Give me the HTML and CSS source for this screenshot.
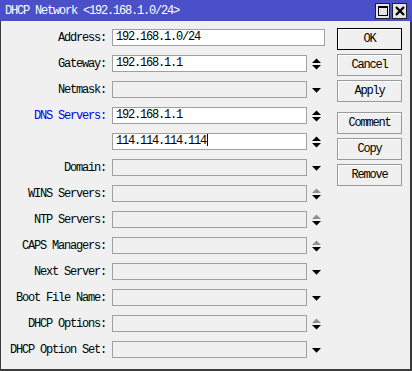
FILE: index.html
```html
<!DOCTYPE html>
<html lang="en">
<head>
  <meta charset="UTF-8">
  <title>DHCP Network</title>
  <link rel="stylesheet" href="styles.css">
</head>
<body>
  <div class="window">
    <div class="titlebar">
      <span class="title">DHCP Network &lt;192.168.1.0/24&gt;</span>
      <div class="tbtns">
        <span class="tbtn"><svg width="10" height="10" viewBox="0 0 10 10"><rect x="0.5" y="0.5" width="9" height="9" fill="none" stroke="#000"/><rect x="0" y="0" width="10" height="2" fill="#000"/></svg></span>
        <span class="tbtn"><svg width="10" height="10" viewBox="0 0 10 10"><path d="M1 1 L9 9 M9 1 L1 9" stroke="#000" stroke-width="2.2"/></svg></span>
      </div>
    </div>

    <div class="content">
      <div class="form">
        <div class="row"><label>Address:</label><div class="field filled wide">192.168.1.0/24</div></div>
        <div class="row"><label>Gateway:</label><div class="field filled">192.168.1.1</div><span class="arrow spin"></span></div>
        <div class="row"><label>Netmask:</label><div class="field"></div><span class="arrow drop"></span></div>
        <div class="row"><label class="blue">DNS Servers:</label><div class="field filled">192.168.1.1</div><span class="arrow spin"></span></div>
        <div class="row"><label></label><div class="field filled">114.114.114.114<i class="caret"></i></div><span class="arrow spin"></span></div>
        <div class="row"><label>Domain:</label><div class="field"></div><span class="arrow drop"></span></div>
        <div class="row"><label>WINS Servers:</label><div class="field"></div><span class="arrow spin off"></span></div>
        <div class="row"><label>NTP Servers:</label><div class="field"></div><span class="arrow spin off"></span></div>
        <div class="row"><label>CAPS Managers:</label><div class="field"></div><span class="arrow spin off"></span></div>
        <div class="row"><label>Next Server:</label><div class="field"></div><span class="arrow drop"></span></div>
        <div class="row"><label>Boot File Name:</label><div class="field"></div><span class="arrow drop"></span></div>
        <div class="row"><label>DHCP Options:</label><div class="field"></div><span class="arrow spin off"></span></div>
        <div class="row"><label>DHCP Option Set:</label><div class="field"></div><span class="arrow drop"></span></div>
      </div>

      <div class="buttons">
        <button class="default">OK</button>
        <button>Cancel</button>
        <button>Apply</button>
        <button class="sep">Comment</button>
        <button>Copy</button>
        <button>Remove</button>
      </div>
    </div>
  </div>

  <script>
    // arrows are the same svg everywhere, fill them in here
    const spin = '<svg width="9" height="12" viewBox="0 0 9 12"><polygon class="up" points="0,5 4.5,0.5 9,5"/><polygon points="0,7 9,7 4.5,11.5"/></svg>';
    const drop = '<svg width="9" height="5" viewBox="0 0 9 5"><polygon points="0,0 9,0 4.5,4.8"/></svg>';
    document.querySelectorAll('.arrow.spin').forEach(el => el.innerHTML = spin);
    document.querySelectorAll('.arrow.drop').forEach(el => el.innerHTML = drop);
  </script>
</body>
</html>
```

FILE: styles.css
```css
body { margin: 0; font-family: 'Liberation Mono', 'DejaVu Sans Mono', monospace; font-size: 12px; letter-spacing: -1.2px; color: #000; }
.window { width: 412px; height: 371px; box-sizing: border-box; background: #f0f0f0; border-left: 1px solid #3a3a3a; border-right: 2px solid #3a3a3a; border-bottom: 2px solid #3a3a3a; }
.titlebar { height: 21px; background: #4b50c8; display: flex; align-items: center; justify-content: space-between; padding: 0 5px 0 5px; margin-left: -1px; margin-right: -2px; }
.title { color: #fff; }
.tbtns { display: flex; gap: 2px; margin-top: 1px; }
.tbtn { width: 13px; height: 14px; border: 1px solid #202020; background: #e4e4e4; display: flex; align-items: center; justify-content: center; }

.content { display: flex; padding-top: 7px; }
.form { display: flex; flex-direction: column; gap: 9px; padding-top: 1px; }
.row { display: flex; align-items: center; height: 17px; }
.row label { width: 105px; margin-right: 6px; text-align: right; white-space: nowrap; }
.row label.blue { color: #0000e6; }
.field { width: 195px; height: 17px; box-sizing: border-box; border: 1px solid #a0a0a0; background: #f0f0f0; padding: 0 3px; line-height: 15px; white-space: nowrap; }
.field.filled { background: #fff; }
.field.wide { width: 213px; }
.caret { display: inline-block; width: 1px; height: 12px; background: #000; vertical-align: -2px; margin-left: 1px; }
.arrow { width: 18px; display: flex; justify-content: center; align-items: center; }
.arrow svg { display: block; fill: #000; }
.arrow.drop svg { margin-top: 1px; }
.arrow.off .up { fill: #909090; }

.buttons { display: flex; flex-direction: column; gap: 4px; margin-left: 12px; }
.buttons button { width: 65px; height: 22px; box-sizing: border-box; border: 1px solid #999; background: #f0f0f0; font: inherit; letter-spacing: -1.2px; color: #000; padding: 0; box-shadow: inset 1px 1px 0 #fff; }
.buttons button.default { border-color: #000; }
.buttons button.sep { margin-top: 6px; }
```
